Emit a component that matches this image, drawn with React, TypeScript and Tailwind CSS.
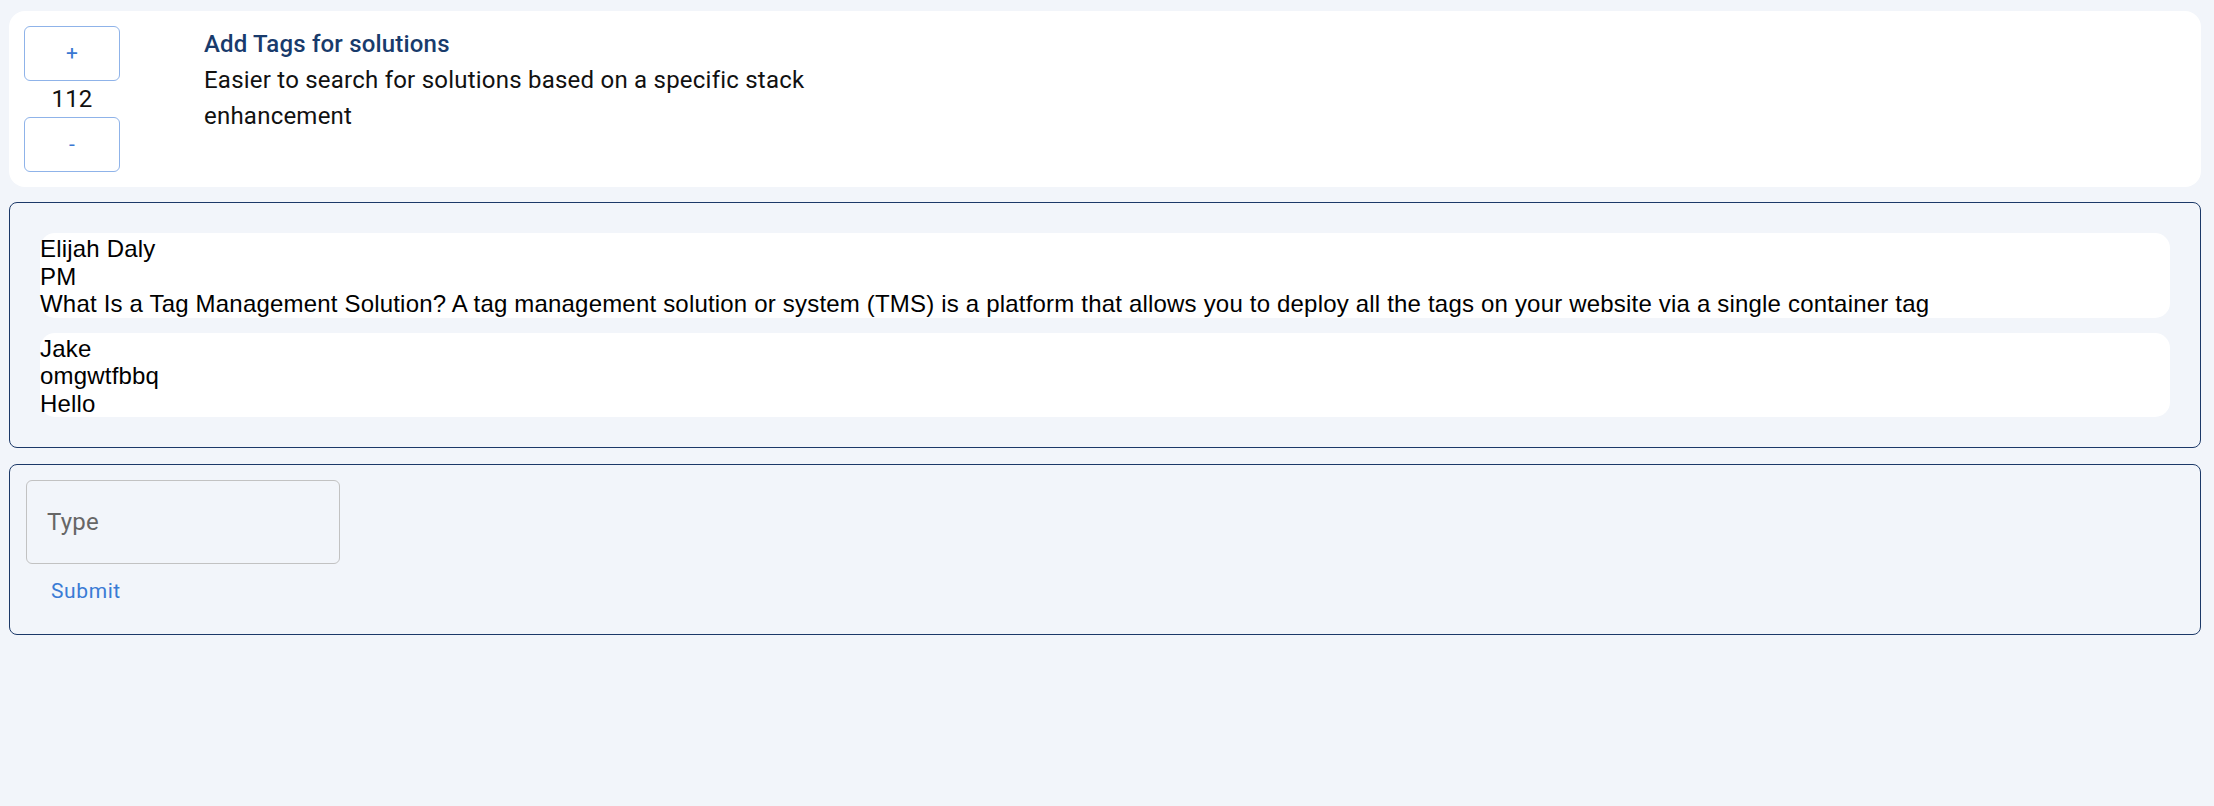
import React from 'react';

type Message = {
  author: string;
  role: string;
  text: string;
};

const messages: Message[] = [
  {
    author: 'Elijah Daly',
    role: 'PM',
    text: 'What Is a Tag Management Solution? A tag management solution or system (TMS) is a platform that allows you to deploy all the tags on your website via a single container tag',
  },
  { author: 'Jake', role: 'omgwtfbbq', text: 'Hello' },
];

const VoteButton: React.FC<{ label: string }> = ({ label }) => (
  <button className="w-[96px] h-[55px] border border-[#8fb3e9] rounded-[6px] bg-white text-[#3a78d2] text-[21px] flex items-center justify-center">
    {label}
  </button>
);

const App: React.FC = () => {
  return (
    <div className="min-h-screen bg-[#f2f5fa] pl-[9px] pr-[13px] pt-[11px] pb-10 font-['Roboto',sans-serif]">
      {/* suggestion card */}
      <div className="bg-white rounded-[16px] p-[15px] flex">
        <div className="flex flex-col items-center w-[96px]">
          <VoteButton label="+" />
          <span className="text-[24px] leading-[36px] tracking-[0.00938em] text-[#111]">112</span>
          <VoteButton label="-" />
        </div>
        <div className="ml-[84px] max-w-[620px]">
          <h2 className="text-[24px] leading-[36px] font-medium tracking-[0.0075em] text-[#193b6c]">Add Tags for solutions</h2>
          <p className="text-[24px] leading-[36px] tracking-[0.00938em] text-[#111]">
            Easier to search for solutions based on a specific stack enhancement
          </p>
        </div>
      </div>

      {/* comments */}
      <div className="mt-[15px] border border-[#1c3968] rounded-[8px] p-[30px] flex flex-col gap-[15px] font-['Liberation_Sans',Arial,sans-serif]">
        {messages.map((m) => (
          <div key={m.author} className="bg-white rounded-[15px] pt-[2px] text-[24px] leading-[27.5px] tracking-[0.19px] text-black">
            <div>{m.author}</div>
            <div>{m.role}</div>
            <div>{m.text}</div>
          </div>
        ))}
      </div>

      {/* reply form */}
      <div className="mt-[16px] border border-[#1c3968] rounded-[8px] px-[16px] py-[15px]">
        <input
          placeholder="Type"
          className="block w-[314px] h-[84px] border border-[#c2c2c2] rounded-[6px] bg-transparent px-[20px] text-[24px] tracking-[0.00938em] text-[#222] placeholder:text-[#666] outline-none"
        />
        <button className="h-[55px] ml-[13px] px-[12px] text-[21px] tracking-[0.02857em] text-[#3a7bd5] flex items-center">
          Submit
        </button>
      </div>
    </div>
  );
};

export default App;
